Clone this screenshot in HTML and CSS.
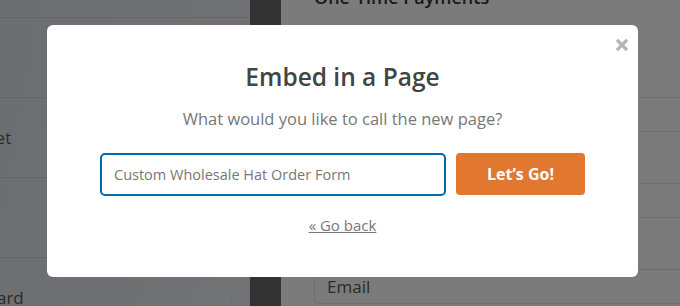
FILE: index.html
```html
<!DOCTYPE html>
<html lang="en">
<head>
    <meta charset="UTF-8">
    <meta name="viewport" content="width=device-width, initial-scale=1.0">
    <title>Embed in a Page</title>
    <link rel="stylesheet" href="styles.css">
</head>
<body>
    <div class="builder">
        <aside class="sidebar">
            <div class="sidebar-item"></div>
            <div class="sidebar-item"></div>
            <div class="sidebar-item"><span class="sidebar-label">Widget</span></div>
            <div class="sidebar-item"></div>
            <div class="sidebar-item">
                <span class="sidebar-label wide">Dashboard</span>
                <span class="chevron">&rsaquo;</span>
            </div>
        </aside>
        <div class="divider"></div>
        <main class="panel">
            <h3 class="panel-title">One-Time Payments</h3>
            <div class="fields">
                <div class="field">
                    <label>Name</label>
                    <div class="field-input"></div>
                </div>
                <div class="field">
                    <label>Phone</label>
                    <div class="field-input"></div>
                </div>
                <div class="field">
                    <label>Email</label>
                    <div class="field-input">Email</div>
                </div>
            </div>
        </main>
    </div>

    <div class="overlay">
        <div class="modal">
            <button class="modal-close" aria-label="Close">
                <svg viewBox="0 0 12 12" width="12" height="12">
                    <path d="M2 2 L10 10 M10 2 L2 10" stroke="currentColor" stroke-width="3.2" stroke-linecap="square"/>
                </svg>
            </button>
            <h2 class="modal-title">Embed in a Page</h2>
            <p class="modal-text">What would you like to call the new page?</p>
            <div class="modal-row">
                <input class="page-name" type="text" placeholder="Custom Wholesale Hat Order Form">
                <button class="go-button">Let’s Go!</button>
            </div>
            <a href="#" class="go-back">« Go back</a>
        </div>
    </div>
</body>
</html>
```

FILE: styles.css
```css
:root {
    --sidebar-bg: #dde0e6;
    --panel-bg: #f7f7f7;
    --accent: #e27730;
    --focus: #036aab;
    --muted: #777777;
    --radius: 6px;
}

* {
    margin: 0;
    padding: 0;
    box-sizing: border-box;
}

body {
    font-family: 'Open Sans', 'Noto Sans', sans-serif;
    width: 680px;
    height: 306px;
    overflow: hidden;
    color: #444;
}

.builder {
    display: flex;
    height: 306px;
}

/* left settings list */
.sidebar {
    width: 250px;
    flex-shrink: 0;
    background: linear-gradient(100deg, #d9dce2, #e2e5ea);
    overflow: hidden;
}

.sidebar-item {
    height: 80px;
    border-bottom: 1px solid #c8ccd3;
    display: flex;
    align-items: center;
    justify-content: space-between;
    color: #555;
    font-size: 17px;
}

.sidebar-item:first-child {
    height: 18px;
}

.sidebar-label {
    margin-left: -44px;
}

.sidebar-label.wide {
    margin-left: -64px;
}

.chevron {
    color: #f2f3f5;
    font-size: 22px;
    margin-right: 20px;
}

.divider {
    width: 31px;
    flex-shrink: 0;
    background: #666;
}

/* right panel */
.panel {
    flex: 1;
    background: var(--panel-bg);
    padding-left: 33px;
    overflow: hidden;
}

.panel-title {
    font-size: 18px;
    font-weight: 600;
    color: #333;
    line-height: 24px;
    margin-top: -15px;
}

.fields {
    padding-top: 53px;
    display: flex;
    flex-direction: column;
    gap: 16px;
}

.field label {
    display: block;
    font-size: 15px;
    line-height: 20px;
    margin-bottom: 15px;
    color: #444;
}

.field-input {
    width: 420px;
    height: 35px;
    border: 1px solid #dcdcdc;
    border-radius: 4px;
    font-size: 17px;
    line-height: 33px;
    padding-left: 12px;
    color: #555;
}

/* modal */
.overlay {
    position: fixed;
    inset: 0;
    background: rgba(0, 0, 0, 0.5);
    padding: 25px 42px 0 47px;
}

.modal {
    position: relative;
    width: 591px;
    height: 252px;
    background: #fff;
    border-radius: var(--radius);
    display: flex;
    flex-direction: column;
    align-items: center;
    padding-top: 36px;
}

.modal-close {
    position: absolute;
    top: 14px;
    right: 10px;
    border: none;
    background: none;
    color: #b4b4b4;
    width: 12px;
    height: 12px;
    display: flex;
}

.modal-title {
    font-size: 24.5px;
    font-weight: 600;
    line-height: 32px;
    color: #444;
}

.modal-text {
    font-size: 16.5px;
    line-height: 24px;
    color: var(--muted);
    margin-top: 14px;
}

.modal-row {
    display: flex;
    gap: 10px;
    margin-top: 22px;
}

.page-name {
    width: 346px;
    height: 43px;
    border: 2px solid var(--focus);
    border-radius: 5px;
    padding: 0 12px;
    font-family: inherit;
    font-size: 14.5px;
    outline: none;
}

.page-name::placeholder {
    color: #777;
}

.go-button {
    width: 129px;
    height: 42px;
    background: var(--accent);
    color: #fff;
    border: none;
    border-radius: 4px;
    font-family: inherit;
    font-size: 16px;
    font-weight: 700;
}

.go-back {
    margin-top: 19px;
    font-size: 15px;
    line-height: 20px;
    color: var(--muted);
}
```
